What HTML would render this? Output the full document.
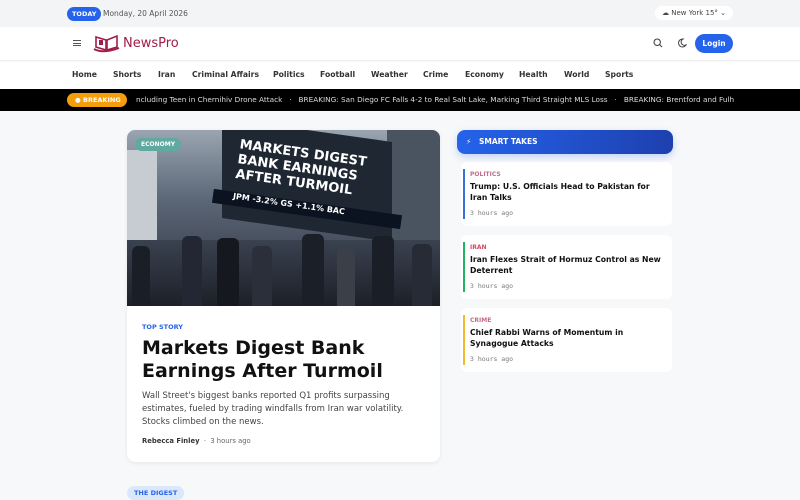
<!DOCTYPE html>
<html><head><meta charset="utf-8"><style>
*{margin:0;padding:0;box-sizing:border-box}
body{width:800px;height:500px;overflow:hidden;background:#f7f8fa;font-family:"DejaVu Sans","Liberation Sans",sans-serif;color:#111;position:relative}
.top{height:27px;background:#f3f4f6;position:relative}
.today{position:absolute;left:67px;top:7px;background:#2563eb;color:#fff;font-size:6.5px;font-weight:bold;padding:3px 5px;border-radius:8px}
.date{position:absolute;left:103px;top:9px;font-size:7.5px;color:#555}
.wx{position:absolute;left:655px;top:6px;background:#fff;border-radius:9px;padding:3px 7px;font-size:7px;color:#444}
.hdr{position:absolute;top:27px;left:0;width:800px;height:34px;background:#fff;border-bottom:1px solid #eee}
.burger{position:absolute;left:73px;top:13px;width:8px;height:6px;border-top:1px solid #555;border-bottom:1px solid #555}
.burger:after{content:"";position:absolute;left:0;top:2px;width:8px;border-top:1px solid #555}
.logo{position:absolute;left:123px;top:9px;font-size:13px;color:#9f1d4a}
.login{position:absolute;left:695px;top:7px;width:38px;height:19px;background:#2563eb;border-radius:10px;color:#fff;font-size:7.5px;font-weight:bold;text-align:center;line-height:19px}
.nav{position:absolute;top:62px;left:0;width:800px;height:27px;background:#fff}
.nav span{position:absolute;top:8px;font-size:7.7px;font-weight:bold;color:#333}
.tick{position:absolute;top:89px;left:0;width:800px;height:22px;background:#000;color:#ddd;font-size:7.3px;white-space:nowrap;overflow:hidden}
.brk{position:absolute;left:67px;top:4px;width:60px;height:14px;background:#f59e0b;border-radius:7px;color:#fff;font-size:6.5px;font-weight:bold;line-height:14px;padding-left:16px}
.card{position:absolute;left:127px;top:130px;width:313px;height:332px;background:#fff;border-radius:8px;overflow:hidden;box-shadow:0 1px 4px rgba(0,0,0,.08)}
.img{height:176px;background:linear-gradient(180deg,#9aa5b1 0%,#5b6676 40%,#2a2f38 100%);position:relative;overflow:hidden}
.st{position:absolute;left:457px;top:130px;width:216px;height:24px;background:linear-gradient(90deg,#2563eb,#1e40af);border-radius:8px;color:#fff;font-size:7.5px;font-weight:bold;line-height:24px;padding-left:22px;box-shadow:0 3px 8px rgba(37,99,235,.25)}
.it{position:absolute;left:461px;width:211px;height:64px;background:#fff;border-radius:6px}
.it .bar{position:absolute;left:2px;top:7px;bottom:7px;width:2px}
.it .c{position:absolute;left:9px;top:9px;font-size:6px;font-weight:bold}
.it .t{position:absolute;left:9px;top:19px;white-space:nowrap;font-size:7.7px;font-weight:bold;line-height:11px}
.it .a{position:absolute;left:9px;top:47px;font-size:6.5px;color:#777;font-family:"DejaVu Sans Mono",monospace}
.p{position:absolute;bottom:0;border-radius:6px 6px 0 0}
</style></head><body>
<div class="top"><span class="today">TODAY</span><span class="date">Monday, 20 April 2026</span><span class="wx">☁ New York 15° ⌄</span></div>
<div class="hdr"><div class="burger"></div>
<svg style="position:absolute;left:93px;top:7px" width="28" height="19" viewBox="0 0 28 19"><path d="M3 3 L13 6 L13 16 L3 13Z M14 6 L24 2 L24 13 L14 16Z" fill="none" stroke="#9f1d4a" stroke-width="1.6"/><path d="M1 15 Q10 20 26 14" stroke="#9f1d4a" stroke-width="2" fill="none"/><rect x="6" y="6" width="4" height="5" fill="#9f1d4a"/></svg>
<span class="logo">NewsPro</span>
<svg style="position:absolute;left:653px;top:11px" width="10" height="10" viewBox="0 0 10 10"><circle cx="4.2" cy="4.2" r="3.2" fill="none" stroke="#444" stroke-width="1.1"/><path d="M6.6 6.6L9 9" stroke="#444" stroke-width="1.1"/></svg>
<svg style="position:absolute;left:677px;top:11px" width="10" height="10" viewBox="0 0 10 10"><path d="M6 1A4 4 0 1 0 9 7 3.2 3.2 0 0 1 6 1Z" fill="none" stroke="#444" stroke-width="1"/></svg>
<div class="login">Login</div></div>
<div class="nav"><span style="left:72px">Home</span><span style="left:113px">Shorts</span><span style="left:158px">Iran</span><span style="left:192px">Criminal Affairs</span><span style="left:273px">Politics</span><span style="left:320px">Football</span><span style="left:371px">Weather</span><span style="left:423px">Crime</span><span style="left:465px">Economy</span><span style="left:519px">Health</span><span style="left:564px">World</span><span style="left:605px">Sports</span></div>
<div class="tick"><div class="brk"><span style="position:absolute;left:8px;top:0">●</span>BREAKING</div><span style="position:absolute;left:136px;top:6px">ncluding Teen in Chernihiv Drone Attack &nbsp; · &nbsp; BREAKING: San Diego FC Falls 4-2 to Real Salt Lake, Marking Third Straight MLS Loss &nbsp; · &nbsp; BREAKING: Brentford and Fulh</span></div>
<div class="card"><div class="img">
<div style="position:absolute;left:0;top:20px;width:30px;height:110px;background:#c7ccd2"></div>
<div style="position:absolute;left:260px;top:0;width:53px;height:120px;background:#4a5461"></div>
<div style="position:absolute;left:95px;top:0;width:170px;height:100px;background:#1f2733;transform:skewY(8deg)"></div>
<div style="position:absolute;left:110px;top:16px;color:#fff;font-size:13px;font-weight:bold;line-height:15px;transform:rotate(8deg)">MARKETS DIGEST<br>BANK EARNINGS<br>AFTER TURMOIL</div>
<div style="position:absolute;left:85px;top:72px;width:190px;height:14px;background:#0b1220;transform:rotate(8deg);color:#fff;font-size:8px;font-weight:bold;padding-left:20px">JPM -3.2% GS +1.1% BAC</div>
<div style="position:absolute;left:0;top:110px;width:313px;height:66px;background:linear-gradient(180deg,#3a4250,#1c2028)"></div>
<div class="p" style="left:5px;width:18px;height:60px;background:#1a1e26"></div>
<div class="p" style="left:55px;width:20px;height:70px;background:#222733"></div>
<div class="p" style="left:90px;width:22px;height:68px;background:#15181f"></div>
<div class="p" style="left:125px;width:20px;height:60px;background:#2a2f3a"></div>
<div class="p" style="left:175px;width:22px;height:72px;background:#1b1f28"></div>
<div class="p" style="left:210px;width:18px;height:58px;background:#3b4048"></div>
<div class="p" style="left:245px;width:22px;height:70px;background:#1a1e27"></div>
<div class="p" style="left:285px;width:20px;height:62px;background:#262b35"></div>
<span style="position:absolute;left:8px;top:8px;background:#5fa9a0;color:#fff;font-size:6px;font-weight:bold;padding:3px 6px;border-radius:8px">ECONOMY</span></div>
<div style="position:absolute;left:15px;top:193px;font-size:6.5px;font-weight:bold;color:#2563eb">TOP STORY</div>
<div style="position:absolute;left:15px;top:207px;font-size:19px;font-weight:bold;line-height:23px;width:290px">Markets Digest Bank Earnings After Turmoil</div>
<div style="position:absolute;left:15px;top:260px;font-size:8.5px;line-height:13px;color:#444;width:290px">Wall Street's biggest banks reported Q1 profits surpassing estimates, fueled by trading windfalls from Iran war volatility. Stocks climbed on the news.</div>
<div style="position:absolute;left:15px;top:307px;font-size:6.8px;color:#666"><b style="color:#333">Rebecca Finley</b> &nbsp;· &nbsp;3 hours ago</div></div>
<div class="st"><span style="position:absolute;left:9px">⚡</span>SMART TAKES</div>
<div class="it" style="top:162px"><div class="bar" style="background:#3b6fd8"></div><div class="c" style="color:#c46a8a">POLITICS</div><div class="t">Trump: U.S. Officials Head to Pakistan for<br>Iran Talks</div><div class="a">3 hours ago</div></div>
<div class="it" style="top:235px"><div class="bar" style="background:#22b35e"></div><div class="c" style="color:#d44a5f">IRAN</div><div class="t">Iran Flexes Strait of Hormuz Control as New<br>Deterrent</div><div class="a">3 hours ago</div></div>
<div class="it" style="top:308px"><div class="bar" style="background:#f5b82e"></div><div class="c" style="color:#c46a8a">CRIME</div><div class="t">Chief Rabbi Warns of Momentum in<br>Synagogue Attacks</div><div class="a">3 hours ago</div></div>
<div style="position:absolute;left:127px;top:486px;background:#dbe7fb;color:#2563eb;font-size:6.5px;font-weight:bold;padding:3px 7px;border-radius:8px">THE DIGEST</div>
</body></html>
